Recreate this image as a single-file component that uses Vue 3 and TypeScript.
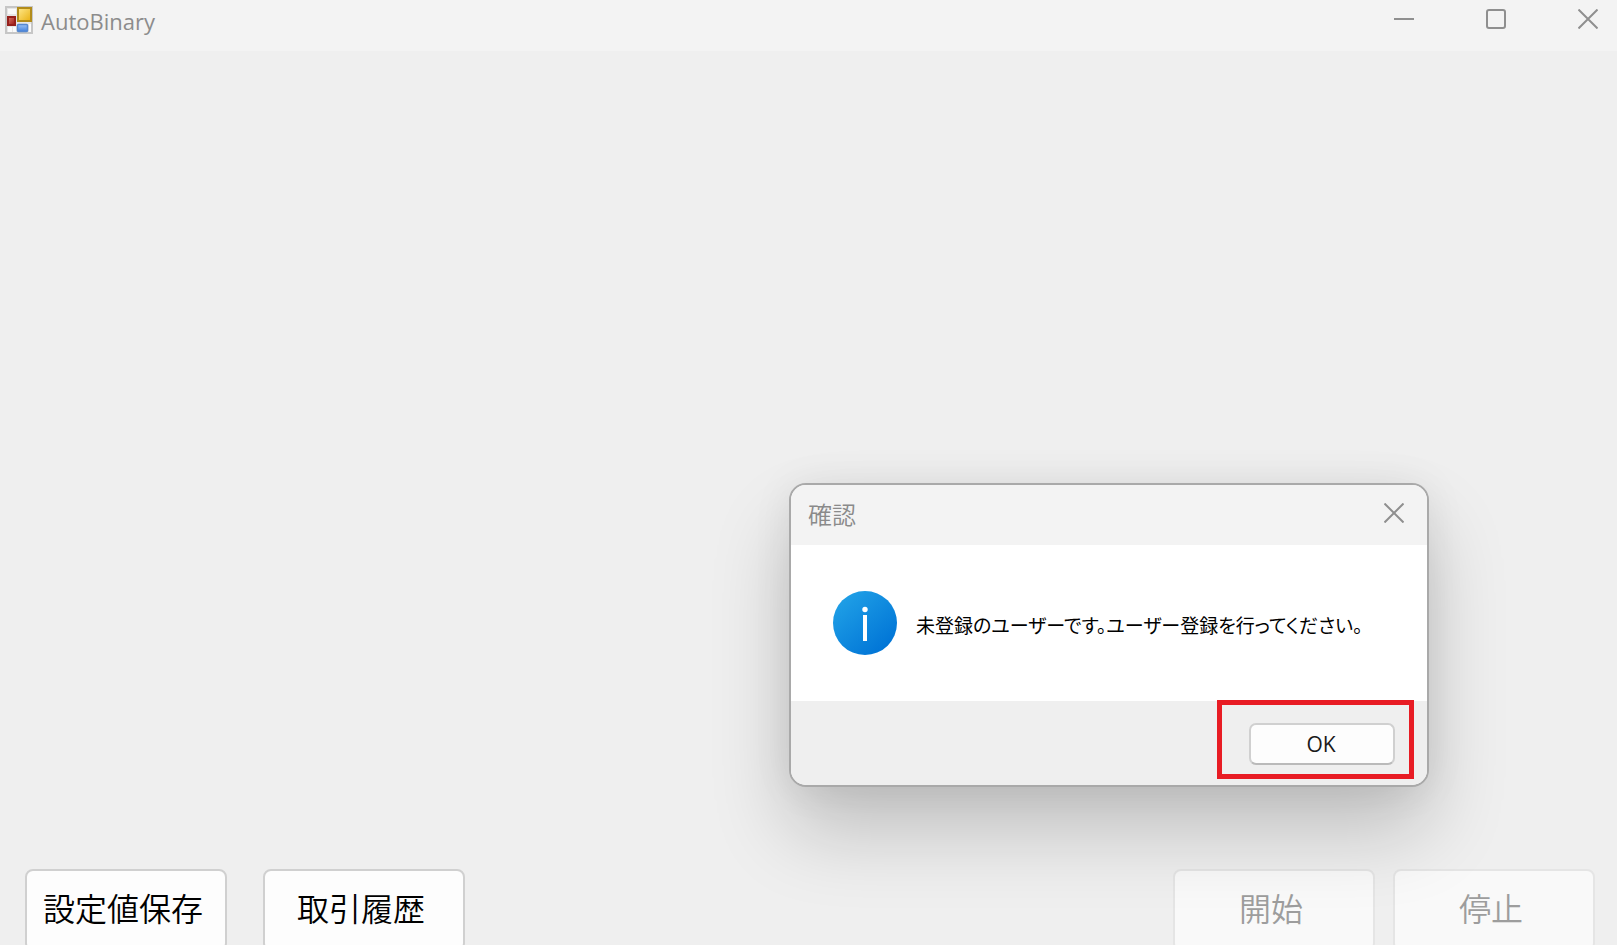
<script setup lang="ts">
import { ref } from 'vue'

interface Action {
  label: string
  disabled: boolean
}

const title = 'AutoBinary'
const leftActions: Action[] = [
  { label: '設定値保存', disabled: false },
  { label: '取引履歴', disabled: false },
]
const rightActions: Action[] = [
  { label: '開始', disabled: true },
  { label: '停止', disabled: true },
]
const dialogOpen = ref(true)

function closeDialog(): void {
  dialogOpen.value = false
}
</script>

<template>
  <div class="window">
    <header class="titlebar">
      <svg class="app-icon" width="28" height="28" viewBox="0 0 28 28" aria-hidden="true">
        <defs>
          <linearGradient id="gold" x1="0" y1="0" x2="1" y2="1">
            <stop offset="0" stop-color="#ffe98c" />
            <stop offset="1" stop-color="#e9b010" />
          </linearGradient>
          <linearGradient id="red" x1="0" y1="0" x2="1" y2="1">
            <stop offset="0" stop-color="#d9776a" />
            <stop offset="1" stop-color="#9c1512" />
          </linearGradient>
          <linearGradient id="blue" x1="0" y1="0" x2="0" y2="1">
            <stop offset="0" stop-color="#9cc3f6" />
            <stop offset="1" stop-color="#4280dc" />
          </linearGradient>
        </defs>
        <rect x="1" y="1" width="26" height="26" fill="#e6e6e6" stroke="#c6c6c6" stroke-width="2" />
        <rect x="3" y="3" width="8" height="5" fill="#fafafa" />
        <rect x="3" y="21" width="4" height="5" fill="#fafafa" />
        <rect x="8" y="21" width="3" height="5" fill="#fafafa" />
        <rect x="24" y="18" width="2" height="8" fill="#fafafa" />
        <rect x="13" y="2" width="13" height="13" fill="url(#gold)" stroke="#b28c1b" stroke-width="2" />
        <rect x="3" y="11" width="7" height="8" fill="url(#red)" stroke="#96201c" stroke-width="2" />
        <rect x="12.5" y="18.5" width="10" height="7" rx="1" fill="url(#blue)" stroke="#5688d0" stroke-width="1.5" />
      </svg>
      <h1 class="app-title">{{ title }}</h1>
      <div class="controls">
        <button type="button" class="control" aria-label="最小化">
          <svg width="20" height="20" viewBox="0 0 20 20"><path d="M0 10H20" /></svg>
        </button>
        <button type="button" class="control" aria-label="最大化">
          <svg width="20" height="20" viewBox="0 0 20 20"><rect x="1" y="1" width="18" height="18" rx="2" /></svg>
        </button>
        <button type="button" class="control" aria-label="閉じる">
          <svg width="20" height="20" viewBox="0 0 20 20"><path d="M0.5 0.5L19.5 19.5M19.5 0.5L0.5 19.5" /></svg>
        </button>
      </div>
    </header>

    <main class="client"></main>

    <footer class="actions">
      <div class="group group-left">
        <button v-for="a in leftActions" :key="a.label" type="button" class="action" :disabled="a.disabled">{{ a.label }}</button>
      </div>
      <div class="group group-right">
        <button v-for="a in rightActions" :key="a.label" type="button" class="action" :disabled="a.disabled">{{ a.label }}</button>
      </div>
    </footer>

    <section v-if="dialogOpen" class="dialog" role="dialog" aria-labelledby="dialog-title" aria-describedby="dialog-message">
      <header class="dialog-head">
        <h2 id="dialog-title" class="dialog-title">確認</h2>
        <button type="button" class="control dialog-close" aria-label="閉じる" @click="closeDialog">
          <svg width="20" height="20" viewBox="0 0 20 20"><path d="M0.5 0.5L19.5 19.5M19.5 0.5L0.5 19.5" /></svg>
        </button>
      </header>
      <div class="dialog-body">
        <svg class="info" width="64" height="64" viewBox="0 0 64 64" aria-hidden="true">
          <defs>
            <linearGradient id="info-fill" x1="0.15" y1="0.1" x2="0.85" y2="0.9">
              <stop offset="0" stop-color="#1f9fe6" />
              <stop offset="1" stop-color="#0074d6" />
            </linearGradient>
          </defs>
          <circle cx="32" cy="32" r="32" fill="url(#info-fill)" />
          <circle cx="32" cy="18.5" r="2.7" fill="#fff" />
          <rect x="30" y="24" width="4" height="26" fill="#fff" />
        </svg>
        <p id="dialog-message" class="message">未登録のユーザーです。ユーザー登録を行ってください。</p>
      </div>
      <div class="dialog-foot">
        <div class="ok-wrap">
          <button type="button" class="ok" @click="closeDialog">OK</button>
          <span class="marker" aria-hidden="true"></span>
        </div>
      </div>
    </section>
  </div>
</template>

<style>
body {
  margin: 0;
}
</style>

<style scoped>
.window {
  position: relative;
  box-sizing: border-box;
  display: flex;
  flex-direction: column;
  min-height: 100vh;
  overflow: hidden;
  background: #efefef;
  font-family: "Open Sans", "Noto Sans CJK JP", sans-serif;
}

button {
  box-sizing: border-box;
  margin: 0;
  padding: 0;
  font-family: inherit;
}

.titlebar {
  display: flex;
  align-items: flex-start;
  height: 51px;
  padding-left: 5px;
  background: #f3f3f3;
}

.app-icon {
  margin-top: 6px;
}

.app-title {
  margin: 5px 0 0 8px;
  font-size: 22px;
  line-height: 32px;
  font-weight: 400;
  color: #8c8c8c;
}

.controls {
  display: flex;
  gap: 32px;
  margin-left: auto;
}

.control {
  display: flex;
  align-items: center;
  justify-content: center;
  width: 60px;
  height: 38px;
  border: 0;
  background: transparent;
}

.controls .control:last-child {
  margin-right: -1px;
}

.control svg {
  fill: none;
  stroke: #8f8f8f;
  stroke-width: 2;
}

.client {
  flex: 1;
}

.actions {
  display: flex;
  justify-content: space-between;
  height: 76px;
  padding: 0 22px 0 25px;
  overflow: hidden;
}

.group {
  display: flex;
}

.group-left {
  gap: 36px;
}

.group-right {
  gap: 18px;
}

.action {
  width: 202px;
  height: 82px;
  padding: 0 6px 6px 0;
  border: 2px solid #d0d0d0;
  border-radius: 8px;
  background: #fdfdfd;
  color: #000;
  font-family: "Noto Sans CJK JP", sans-serif;
  font-size: 32px;
  font-weight: 350;
  line-height: 40px;
}

.action:disabled {
  border-color: #e5e5e5;
  background: #f9f9f9;
  color: #9d9d9d;
}

.dialog {
  position: absolute;
  right: 188px;
  bottom: 158px;
  box-sizing: border-box;
  width: 640px;
  border: 2px solid #a9a9a9;
  border-radius: 17px;
  background: #fff;
  box-shadow: 0 44px 80px rgba(0, 0, 0, 0.2), 0 2px 40px rgba(0, 0, 0, 0.07);
}

.dialog-head {
  display: flex;
  align-items: flex-start;
  justify-content: space-between;
  height: 60px;
  padding-left: 17px;
  border-radius: 15px 15px 0 0;
  background: #f3f3f3;
}

.dialog-title {
  margin: 0;
  font-family: "Noto Sans CJK JP", sans-serif;
  font-size: 24px;
  line-height: 58px;
  font-weight: 350;
  color: #8a8a8a;
}

.dialog-close {
  width: 66px;
  height: 56px;
}

.dialog-body {
  display: flex;
  align-items: center;
  gap: 19px;
  height: 156px;
  padding-left: 42px;
}

.message {
  margin: 0;
  padding-top: 4px;
  font-family: "Noto Sans CJK JP", sans-serif;
  font-feature-settings: "palt";
  font-size: 19px;
  line-height: 32px;
  white-space: nowrap;
  color: #000;
}

.dialog-foot {
  box-sizing: border-box;
  display: flex;
  align-items: center;
  justify-content: flex-end;
  height: 84px;
  padding: 2px 32px 0 0;
  border-radius: 0 0 15px 15px;
  background: #efefef;
}

.ok-wrap {
  position: relative;
}

.ok {
  display: block;
  width: 146px;
  height: 42px;
  padding-right: 2px;
  border: 2px solid #d0d0d0;
  border-bottom-color: #bababa;
  border-radius: 7px;
  background: #fdfdfd;
  color: #1a1a1a;
  font-size: 21px;
  line-height: 28px;
}

.marker {
  position: absolute;
  inset: -23px -19px -14px -32px;
  border: 5px solid #e81c24;
  pointer-events: none;
}
</style>
